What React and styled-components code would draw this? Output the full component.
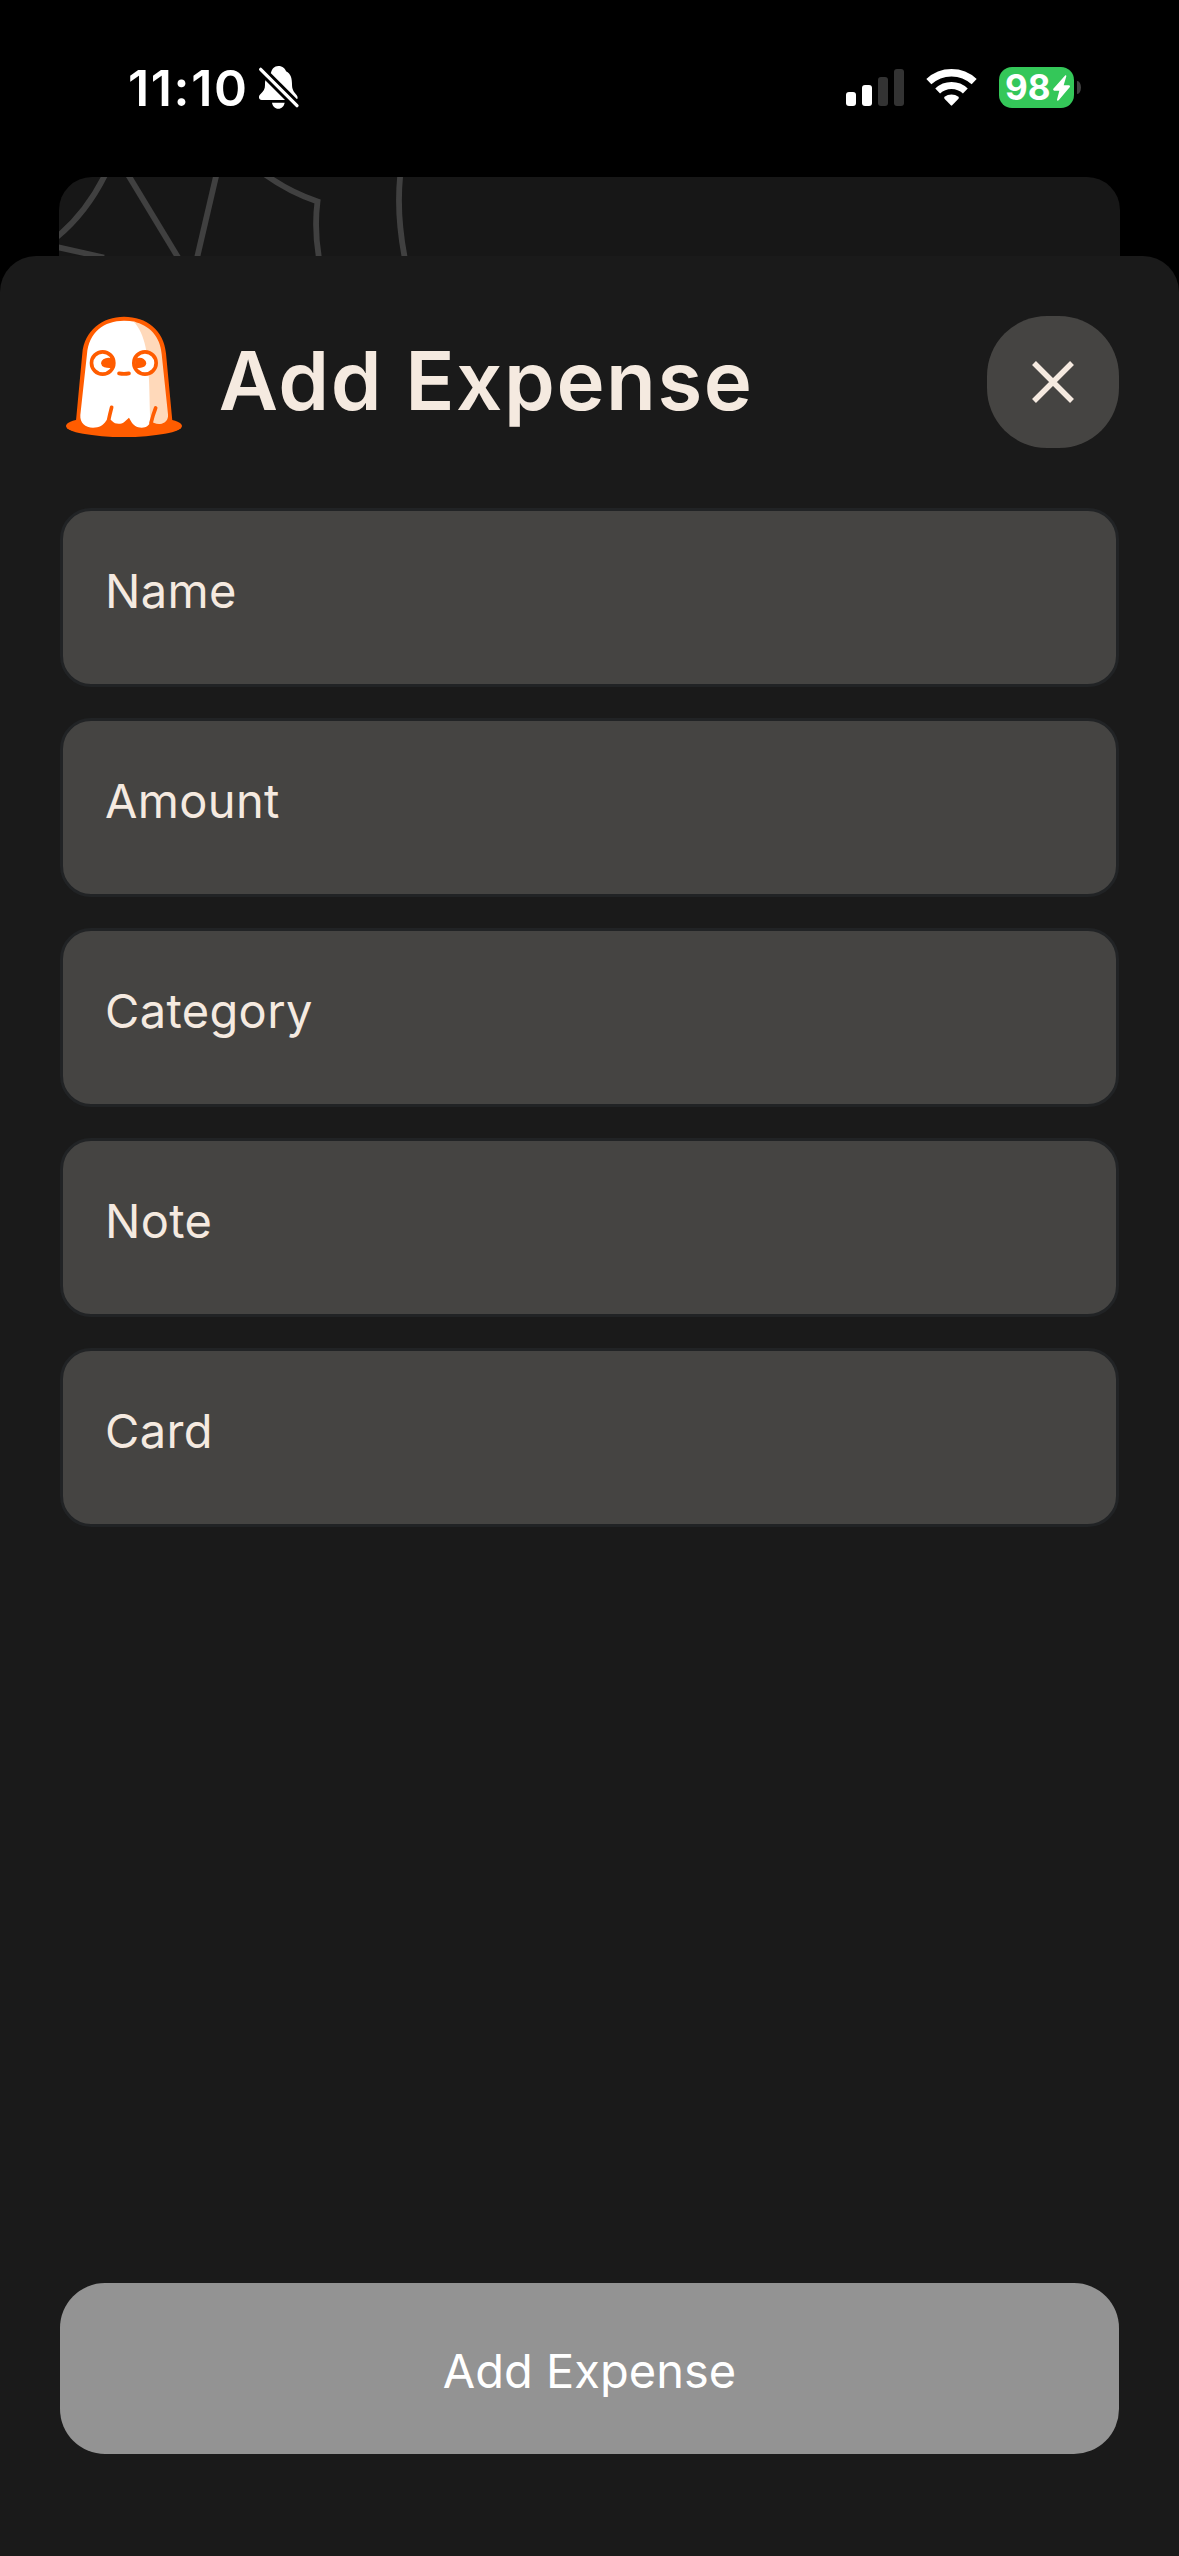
import React from 'react';
import styled, { createGlobalStyle } from 'styled-components';

const GlobalStyle = createGlobalStyle`
  * {
    box-sizing: border-box;
  }

  body {
    margin: 0;
    background: #000;
    font-family: Inter, 'Liberation Sans', sans-serif;
  }
`;

const Screen = styled.div`
  width: 1179px;
  height: 2556px;
  display: flex;
  flex-direction: column;
  overflow: hidden;
  background: #000;
`;

const StatusBar = styled.header`
  height: 177px;
  flex: none;
  display: flex;
  align-items: center;
  justify-content: space-between;
  padding: 0 98px 2px 128px;
`;

const StatusGroup = styled.div`
  display: flex;
  align-items: center;
  gap: ${({ gap }) => gap}px;

  svg {
    display: block;
  }
`;

const Time = styled.span`
  color: #fff;
  font-size: 50px;
  font-weight: 600;
  line-height: 60px;
  letter-spacing: 1.65px;
`;

const Battery = styled.div`
  display: flex;
  align-items: center;
  gap: 3px;
`;

const BatteryBody = styled.div`
  width: 75px;
  height: 41px;
  display: flex;
  align-items: center;
  gap: 2px;
  padding-left: 6px;
  border-radius: 13px;
  background: #34c759;
  color: #fff;
  font-size: 35px;
  font-weight: 700;
  line-height: 41px;
`;

const BatteryCap = styled.span`
  width: 4px;
  height: 13px;
  border-radius: 0 4px 4px 0 / 0 7px 7px 0;
  background: #404040;
`;

const BackCard = styled.div`
  height: 79px;
  flex: none;
  margin: 0 59px;
  border-radius: 33px 33px 0 0;
  overflow: hidden;
  background: #171717;

  svg {
    display: block;
  }
`;

const Sheet = styled.main`
  flex: 1;
  display: flex;
  flex-direction: column;
  padding: 60px 60px 102px;
  border-radius: 36px 36px 0 0;
  background: #1a1a1a;
`;

const SheetHeader = styled.div`
  height: 132px;
  display: flex;
  align-items: center;
  padding-left: 6px;
  margin-bottom: 60px;
`;

const Logo = styled.svg`
  flex: none;
  margin-bottom: 11px;
`;

const Title = styled.h1`
  flex: 1;
  margin: 0 0 0 36px;
  padding-bottom: 2px;
  color: #f5eae0;
  font-size: 81.5px;
  font-weight: 600;
  line-height: 98px;
  letter-spacing: 1.55px;
  white-space: nowrap;
`;

const CloseButton = styled.button`
  width: 132px;
  height: 132px;
  flex: none;
  display: flex;
  align-items: center;
  justify-content: center;
  padding: 0;
  border: none;
  border-radius: 60px;
  background: #454442;
`;

const Form = styled.form`
  flex: 1;
  display: flex;
  flex-direction: column;
  gap: 31px;
`;

const Field = styled.label`
  height: 179px;
  display: block;
  padding: 52px 42px 0;
  border: 3px solid #212325;
  border-radius: 31px;
  background: #454442;
  color: #f5eae0;
  font-size: 47px;
  line-height: 56px;
  letter-spacing: 0.35px;
`;

const SubmitButton = styled.button`
  height: 171px;
  margin-top: auto;
  padding: 5px 0 0;
  border: none;
  border-radius: 45px;
  background: #939393;
  color: #fff;
  font-family: inherit;
  font-size: 47px;
  line-height: 56px;
`;

const BellOff = () => (
  <svg width="43.33" height="44.67" viewBox="470 78 130 134">
    <path
      fill="#fff"
      d="M512 101C514 91 522 81 534 81C547 81 555 89 557 97C572 104 575 120 575 135C575 152 580 158 588 167C595 175 592 183 584 183H484C474 183 474 171 480 166C490 156 494 150 494 138C494 122 497 108 512 101ZM515 191H553C551 202 544 209 534 209C524 209 517 202 515 191Z"
    />
    <path stroke="#000" strokeWidth="27" d="M465 75L606 216" />
    <path stroke="#fff" strokeWidth="10" strokeLinecap="round" d="M481 91L590 200" />
  </svg>
);

const Signal = () => (
  <svg width="58" height="37" viewBox="0 0 58 37">
    <rect y="23" width="10" height="14" rx="3" fill="#fff" />
    <rect x="16" y="16" width="10" height="21" rx="3" fill="#fff" />
    <rect x="32" y="8" width="10" height="29" rx="3" fill="#333" />
    <rect x="48" width="10" height="37" rx="3" fill="#333" />
  </svg>
);

const Wifi = () => (
  <svg width="51" height="37" viewBox="318.5 87 153 111">
    <g fill="none" stroke="#fff">
      <path strokeWidth="22" d="M327 125A99.5 99.5 0 0 1 463 125" />
      <path strokeWidth="21" d="M353.500 153A60.500 60.500 0 0 1 436.500 153" />
    </g>
    <path fill="#fff" d="M374 170.500A35 35 0 0 1 416 170.500Q418 173 416 176L397 196Q395 198 393 196L374 176Q372 173 374 170.500Z" />
  </svg>
);

const Bolt = () => (
  <svg width="17" height="26" viewBox="698 107 51 78">
    <path
      fill="#fff"
      d="M735 108L699 148Q697 153 702 154H717L710 181Q710 186 715 183L748 144Q751 139 745 138H730L738 111Q738 106 735 108Z"
    />
  </svg>
);

const Web = () => (
  <svg width="1061" height="79" viewBox="59 177 1061 79" fill="none" stroke="#404040" strokeWidth="5.800">
    <path d="M105.500 174Q87 212 57 237" />
    <path d="M57 247L104 257.500" />
    <path d="M127 173L179 259" />
    <path d="M216.800 173L197 258" />
    <path d="M263 173Q289 192 317.500 201.500Q314 228 319 258" />
    <path d="M400.500 173Q396 212 404.800 258" />
  </svg>
);

const Ghost = () => (
  <Logo width="116.67" height="121.67" viewBox="48 48 350 365">
    <ellipse cx="222" cy="378" rx="174" ry="33" fill="#ff5c00" />
    <path
      fill="#ff5c00"
      d="M78 362L97 160C103 91 158 50 222 50C290 50 342 91 348 160L367 362Z"
    />
    <path
      fill="#fff"
      d="M222 62C162 62 116 97 111 162L91 345C89 369 106 383 129 383C148 383 160 376 168 363C175 355 181 357 187 364C194 373 212 374 222 367L237 353L243 364C250 376 260 383 275 383C290 383 297 376 303 364L308 340L320 190L285 90L255 65Q240 62 222 62Z"
    />
    <path
      fill="#ffd9ba"
      d="M251 65C298 75 331 109 335 162L354 343C356 360 345 371 330 372C318 373 309 368 303 364C299 350 300 320 297 240C295 170 286 100 251 65Z"
    />
    <g fill="none" stroke="#ff5c00" strokeLinecap="round">
      <path strokeWidth="11" d="M185 322Q179 345 175 364" />
      <path strokeWidth="11" d="M317 324Q309 344 303 369" />
      <path strokeWidth="11" d="M207 220Q222 223 237 220" />
    </g>
    <g fill="#fff" stroke="#ff5c00" strokeWidth="11">
      <circle cx="158" cy="189" r="33.500" />
      <circle cx="285" cy="189" r="33.500" />
    </g>
    <path
      fill="#ff5c00"
      d="M188 176Q172 170 160 178Q152 184 153 190Q154 199 163 202Q175 205 190 203ZM256 176Q272 170 281 177Q289 182 289 190Q287 200 278 202Q270 205 255 203Z"
    />
  </Logo>
);

const Cross = () => (
  <svg width="44" height="44" viewBox="0 0 44 44" stroke="#f5eae0" strokeWidth="5.500">
    <path d="M3 3L41 41M41 3L3 41" />
  </svg>
);

const fields = ['Name', 'Amount', 'Category', 'Note', 'Card'];

const App = () => (
  <Screen>
    <GlobalStyle />
    <StatusBar>
      <StatusGroup gap={8}>
        <Time>11:10</Time>
        <BellOff />
      </StatusGroup>
      <StatusGroup gap={22}>
        <Signal />
        <Wifi />
        <Battery>
          <BatteryBody>
            98
            <Bolt />
          </BatteryBody>
          <BatteryCap />
        </Battery>
      </StatusGroup>
    </StatusBar>
    <BackCard>
      <Web />
    </BackCard>
    <Sheet>
      <SheetHeader>
        <Ghost />
        <Title>Add Expense</Title>
        <CloseButton type="button" aria-label="Close">
          <Cross />
        </CloseButton>
      </SheetHeader>
      <Form>
        {fields.map((name) => (
          <Field key={name}>{name}</Field>
        ))}
        <SubmitButton type="button">Add Expense</SubmitButton>
      </Form>
    </Sheet>
  </Screen>
);

export default App;
